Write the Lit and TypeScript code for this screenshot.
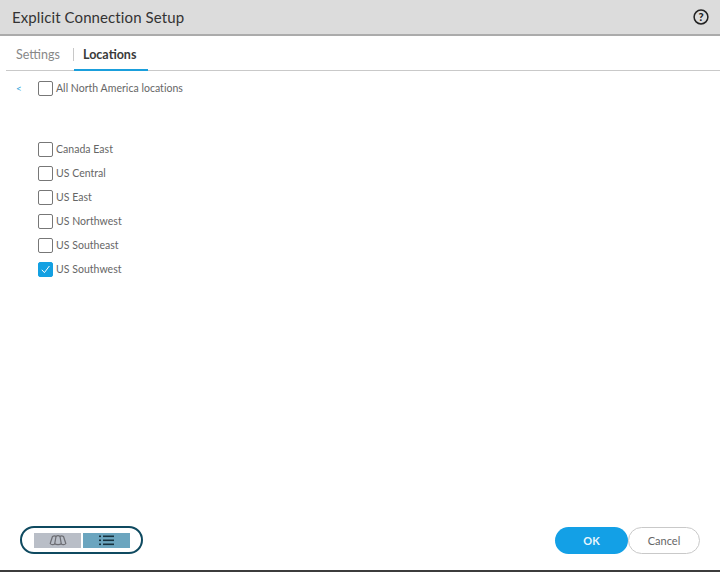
import { LitElement, html, css } from "lit";
import { customElement } from "lit/decorators.js";

const rows = [
  ["Canada East", false],
  ["US Central", false],
  ["US East", false],
  ["US Northwest", false],
  ["US Southeast", false],
  ["US Southwest", true],
] as const;

@customElement("app-root")
export class AppRoot extends LitElement {
  static styles = css`
    :host { display: block; width: 720px; height: 572px; font-family: Lato, "Liberation Sans", sans-serif; background: #fff; overflow: hidden; }
    .dialog { height: 572px; box-sizing: border-box; display: flex; flex-direction: column; border-bottom: 2px solid #3c3c3c; }
    .head { height: 36px; box-sizing: border-box; flex: none; background: #dcdcdc; border-bottom: 2px solid #ababab; display: flex; align-items: center; justify-content: space-between; padding: 0 11px 0 12px; }
    .title { font-size: 15px; color: #333; letter-spacing: 0.1px; }
    .help { display: block; width: 18px; height: 18px; margin-right: -0.5px; }
    .tabs { margin: 0 0 0 6px; height: 35px; flex: none; display: flex; align-items: stretch; border-bottom: 1px solid #c9c9c9; box-sizing: border-box; font-size: 12.5px; }
    .tab { display: flex; align-items: center; color: #888; padding: 3px 0 0 10px; width: 67px; box-sizing: border-box; }
    .sep { width: 1px; height: 13px; background: #c8c8c8; align-self: center; margin-top: 3px; }
    .tab.active { color: #3a3a3a; font-weight: 700; width: 74px; padding-left: 9px; border-bottom: 2px solid #1a9fdc; margin-bottom: -1px; height: 35px; }
    .body { flex: 1; padding: 9px 0 0 16px; font-size: 10.5px; color: #666; letter-spacing: 0.03px; }
    .all { display: flex; align-items: center; height: 16px; }
    .back { width: 22px; color: #2fa3dc; font-size: 10px; }
    .list { margin: 45px 0 0 22px; display: flex; flex-direction: column; gap: 8px; }
    .row { display: flex; align-items: center; height: 16px; }
    .box { width: 13px; height: 13px; border: 1px solid #777; border-radius: 2px; margin-right: 3px; box-sizing: content-box; flex: none; background: #fff; }
    .box.on { background: #13a0e2; border-color: #13a0e2; }
    .box svg { display: block; width: 13px; height: 13px; }
    .foot { height: 45px; flex: none; display: flex; align-items: flex-start; justify-content: space-between; padding: 1px 20px 0; box-sizing: border-box; }
    .toggle { width: 123px; height: 28px; box-sizing: border-box; border: 2px solid #0f4a60; border-radius: 14px; display: flex; align-items: center; gap: 2px; padding-left: 12px; }
    .seg { height: 15px; display: flex; align-items: center; justify-content: center; }
    .seg.map { background: #b9bec7; width: 47px; }
    .seg.listv { background: #6ba5bf; width: 47px; }
    .seg svg { display: block; }
    .btns { display: flex; align-items: center; margin-top: 1px; margin-left: -1px; }
    .ok, .cancel { font: inherit; font-size: 11px; height: 27px; border-radius: 14px; padding: 0; box-sizing: border-box; }
    .ok { width: 73px; background: #13a0e6; color: #e8f6fd; border: none; font-weight: 700; }
    .cancel { width: 72px; background: #fff; color: #666; border: 1px solid #c9c9c9; }
  `;

  render() {
    return html`<div class="dialog">
      <div class="head">
        <div class="title">Explicit Connection Setup</div>
        <svg class="help" viewBox="0 0 18 18"><circle cx="9" cy="9" r="6.9" fill="none" stroke="#222" stroke-width="1.5"/><text x="9" y="12.800" text-anchor="middle" font-size="11" font-weight="900" fill="#222" font-family="Lato, sans-serif">?</text></svg>
      </div>
      <div class="tabs">
        <div class="tab">Settings</div>
        <div class="sep"></div>
        <div class="tab active">Locations</div>
      </div>
      <div class="body">
        <div class="all"><span class="back">&lt;</span><span class="box"></span><span>All North America locations</span></div>
        <div class="list">
          ${rows.map(([name, on]) => html`<div class="row">
            <span class="box ${on ? "on" : ""}">${on ? html`<svg viewBox="0 0 13 13"><path d="M2.8 6.8 5.4 9.6 10.4 3" fill="none" stroke="#fff" stroke-width="1"/></svg>` : ""}</span>
            <span>${name}</span>
          </div>`)}
        </div>
      </div>
      <div class="foot">
        <div class="toggle">
          <div class="seg map"><svg width="18" height="11" viewBox="0 0 18 11" fill="none" stroke="#6d6e74" stroke-width="1.200"><path d="M3.500 1.500C4.700 .7 6.300 .7 7 1.500C8 .7 10 .7 11 1.500C11.700 .7 13.300 .7 14.500 1.500L16.800 8.500C15.800 10 13.200 10 12.300 8.800C11 10 7 10 5.700 8.800C4.800 10 2.200 10 1.200 8.500Z"/><path d="M7 1.500 5.700 8.800M11 1.500 12.300 8.800"/></svg></div>
          <div class="seg listv"><svg width="15" height="11" viewBox="0 0 15 11" fill="#17323f"><rect x="0" y="0.500" width="2" height="1.600"/><rect x="0" y="4.500" width="2" height="1.600"/><rect x="0" y="8.500" width="2" height="1.600"/><rect x="4" y="0.500" width="11" height="1.600"/><rect x="4" y="4.500" width="11" height="1.600"/><rect x="4" y="8.500" width="11" height="1.600"/></svg></div>
        </div>
        <div class="btns"><button class="ok">OK</button><button class="cancel">Cancel</button></div>
      </div>
    </div>`;
  }
}
